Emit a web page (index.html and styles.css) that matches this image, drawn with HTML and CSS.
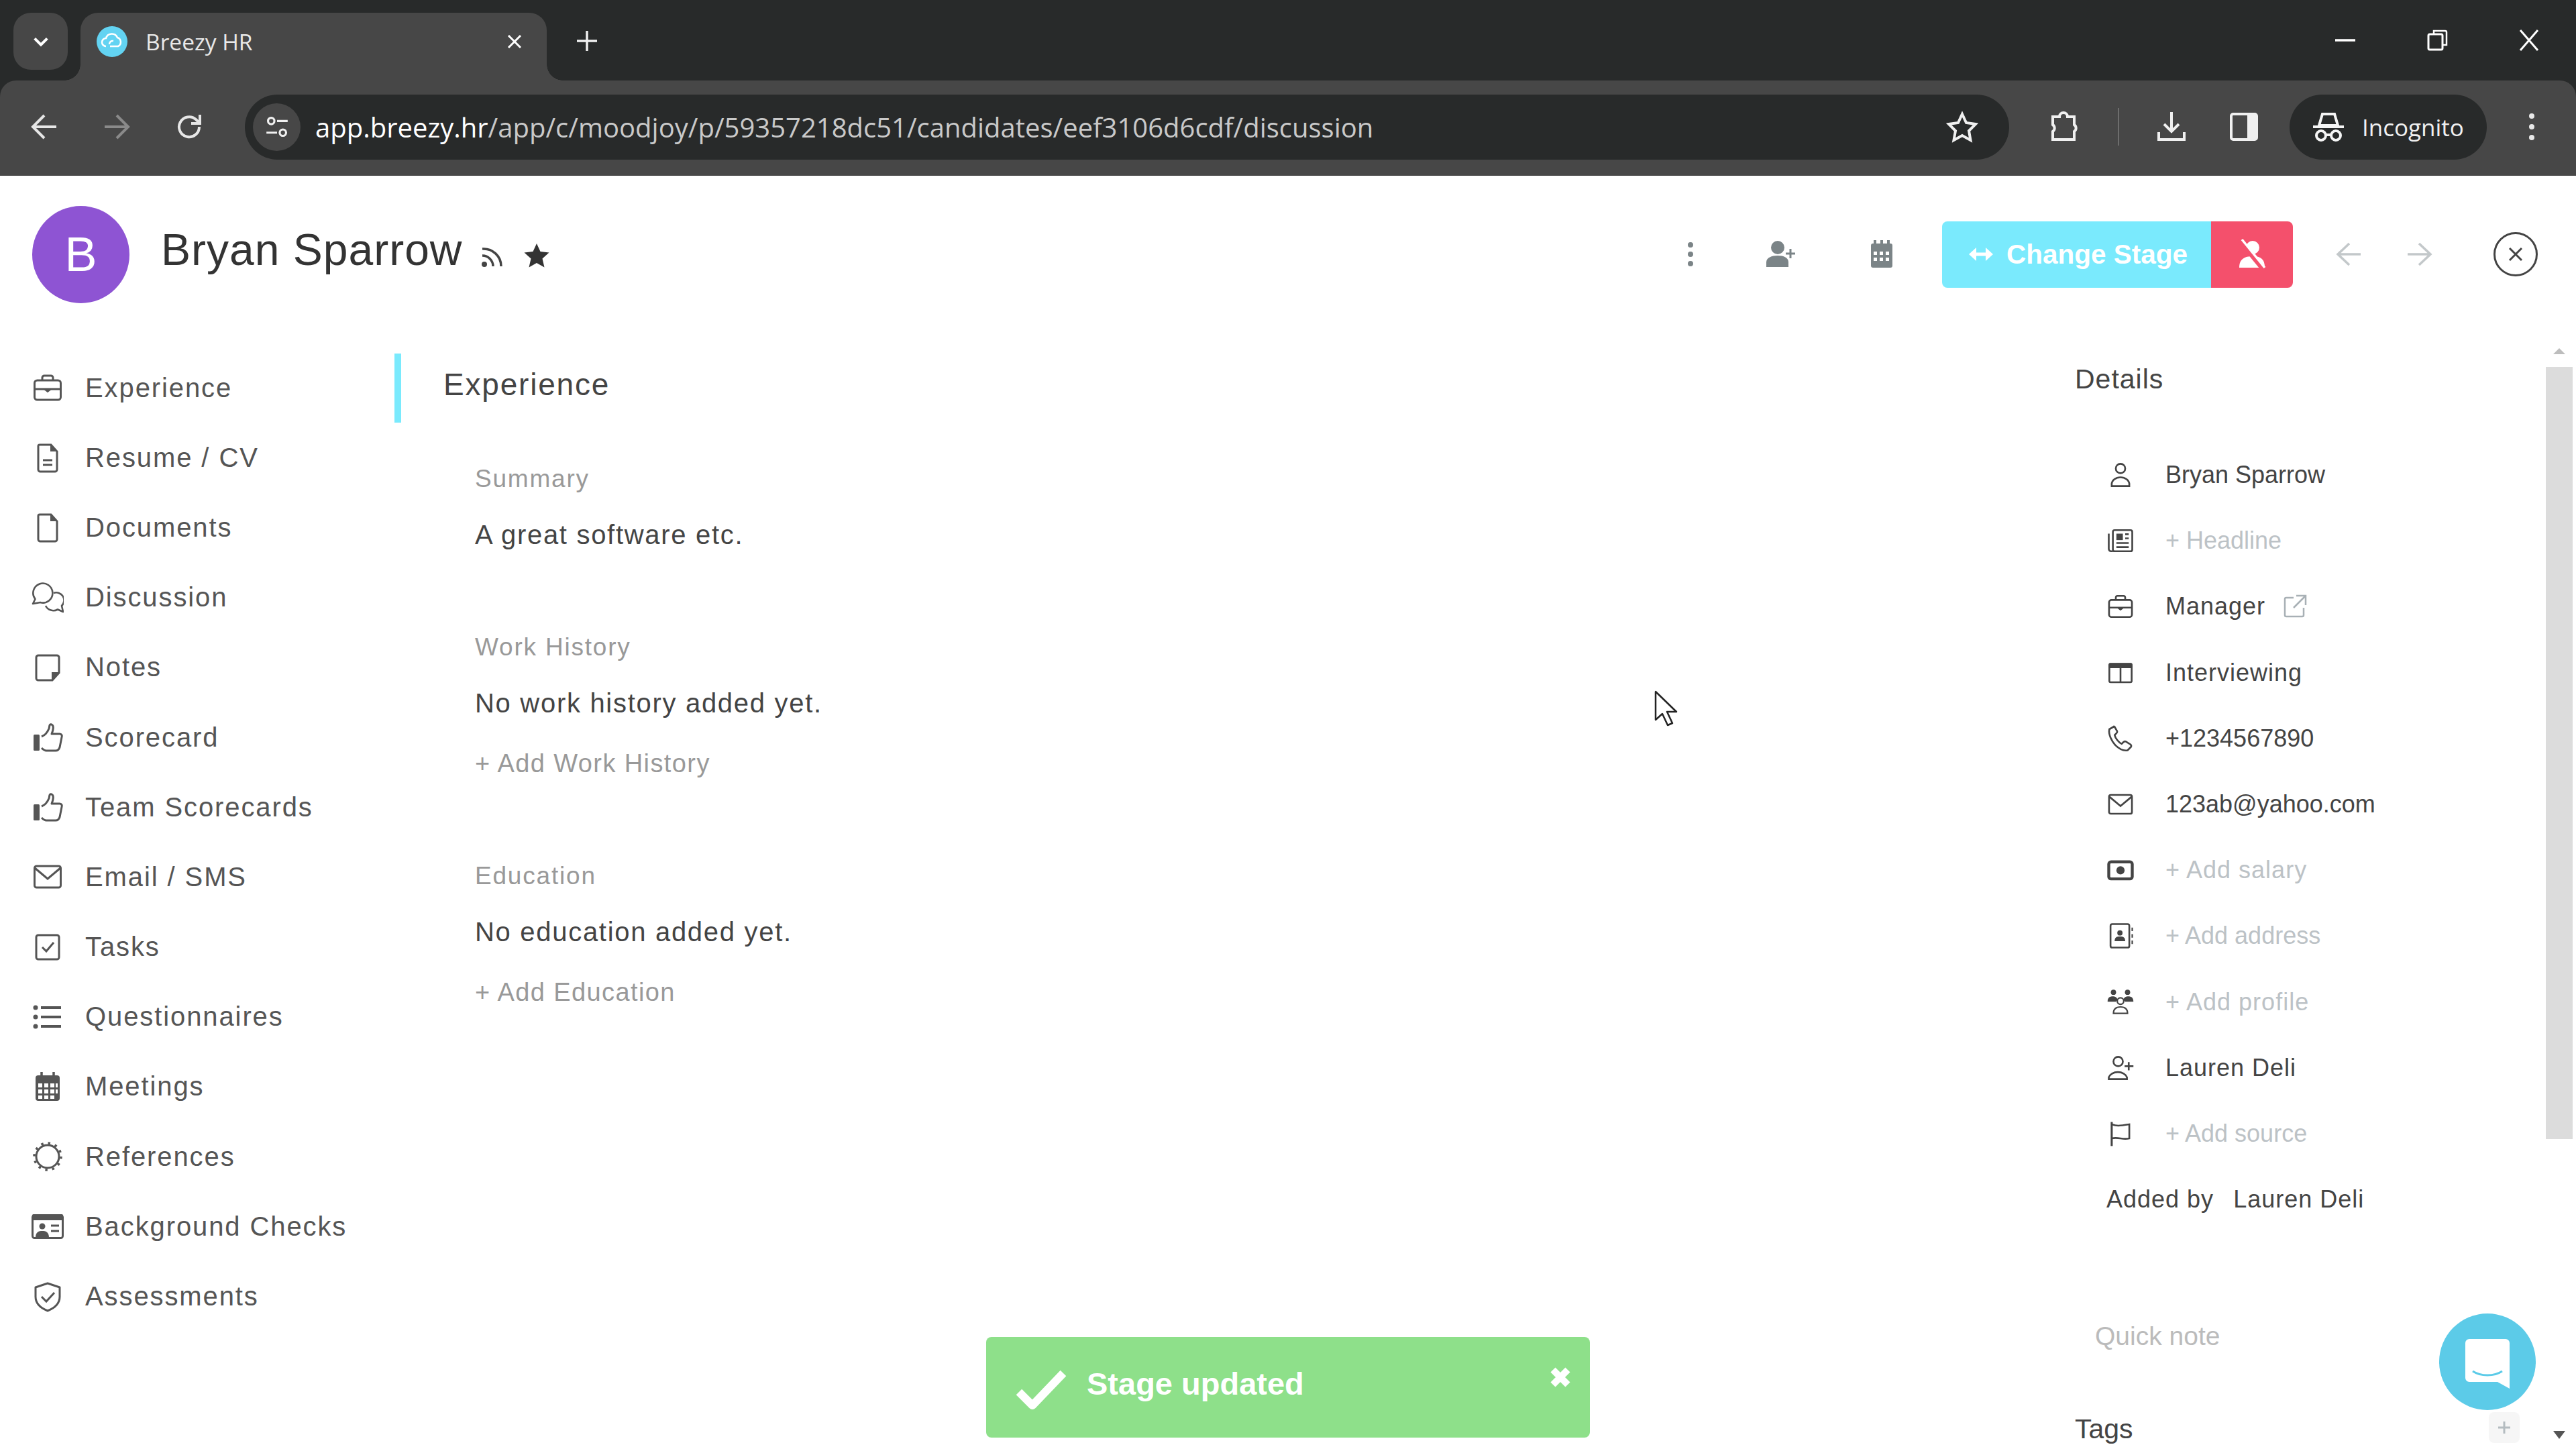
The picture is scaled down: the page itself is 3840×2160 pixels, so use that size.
FILE: index.html
```html
<!DOCTYPE html>
<html lang="en">
<head>
<meta charset="utf-8">
<title>Breezy HR</title>
<link rel="stylesheet" href="styles.css">
</head>
<body>
<svg class="sprite" aria-hidden="true">
  <symbol id="i-brief" viewBox="0 0 48 48"><g fill="none" stroke="currentColor" stroke-width="3"><rect x="4.500" y="13" width="39" height="29" rx="4"/><path d="M16 13V9a3 3 0 0 1 3-3h10a3 3 0 0 1 3 3v4M4.500 26h39"/></g><path d="M19 26h10l-5 4z" fill="currentColor" stroke="currentColor" stroke-width="2"/></symbol>
  <symbol id="i-resume" viewBox="0 0 48 48"><path d="M10 7a2 2 0 0 1 2-2h17l9 10v27a3 3 0 0 1-3 3H13a3 3 0 0 1-3-3z" fill="none" stroke="currentColor" stroke-width="3"/><path d="M28 5l10 10H28z" fill="currentColor"/><path d="M17 28h14M17 35h14" stroke="currentColor" stroke-width="3"/></symbol>
  <symbol id="i-doc" viewBox="0 0 48 48"><path d="M10 7a2 2 0 0 1 2-2h17l9 10v27a3 3 0 0 1-3 3H13a3 3 0 0 1-3-3z" fill="none" stroke="currentColor" stroke-width="3"/><path d="M28 5l10 10H28z" fill="currentColor"/></symbol>
  <symbol id="i-talk" viewBox="0 0 48 48"><g fill="none" stroke="currentColor" stroke-width="2.600" stroke-linejoin="round"><path d="M2 33l3.500-7A14.500 14.500 0 1 1 13 31z"/><path d="M33 17a11.500 11.500 0 0 1 12 19l2 9-8-3.500A13 13 0 0 1 21 36"/></g></symbol>
  <symbol id="i-note" viewBox="0 0 48 48"><path d="M10 6h28a3 3 0 0 1 3 3v23L31 43H10a3 3 0 0 1-3-3V9a3 3 0 0 1 3-3z" fill="none" stroke="currentColor" stroke-width="3"/><path d="M41 31H30v12z" fill="currentColor"/></symbol>
  <symbol id="i-thumb" viewBox="0 0 48 48"><rect x="3" y="20" width="9" height="24" rx="1.500" fill="currentColor"/><path d="M15 23c5-2 9-7 11-12 1-3 0-7 4-6 4 2 2 9 0 14h12c3 0 4 3 3 5l-3 15c-1 3-3 5-6 5H22c-3 0-5-2-7-4" fill="none" stroke="currentColor" stroke-width="3" stroke-linejoin="round"/></symbol>
  <symbol id="i-mail" viewBox="0 0 48 48"><rect x="4.500" y="8" width="39" height="32" rx="3" fill="none" stroke="currentColor" stroke-width="3"/><path d="M5 11l19 16 19-16" fill="none" stroke="currentColor" stroke-width="3"/></symbol>
  <symbol id="i-task" viewBox="0 0 48 48"><rect x="7" y="6" width="34" height="36" rx="3" fill="none" stroke="currentColor" stroke-width="3"/><path d="M16 24l6 6 11-13" fill="none" stroke="currentColor" stroke-width="3"/></symbol>
  <symbol id="i-list" viewBox="0 0 48 48"><path d="M14 10h30M14 24h30M14 38h30" stroke="currentColor" stroke-width="4"/><circle cx="6" cy="10" r="3.500" fill="currentColor"/><circle cx="6" cy="24" r="3.500" fill="currentColor"/><circle cx="6" cy="38" r="3.500" fill="currentColor"/></symbol>
  <symbol id="i-cal" viewBox="0 0 48 48"><path d="M15 2v8M33 2v8" stroke="currentColor" stroke-width="3.500"/><rect x="6" y="7" width="36" height="38" rx="4" fill="currentColor"/><g fill="#fff"><rect x="10" y="19" width="6" height="6"/><rect x="19" y="19" width="6" height="6"/><rect x="28" y="19" width="6" height="6"/><rect x="36" y="19" width="3" height="6"/><rect x="10" y="28" width="6" height="6"/><rect x="19" y="28" width="6" height="6"/><rect x="28" y="28" width="6" height="6"/><rect x="36" y="28" width="3" height="6"/><rect x="10" y="37" width="6" height="5"/><rect x="19" y="37" width="6" height="5"/><rect x="28" y="37" width="6" height="5"/></g></symbol>
  <symbol id="i-ref" viewBox="0 0 48 48"><g fill="none" stroke="currentColor"><circle cx="24" cy="24" r="17" stroke-width="3"/><circle cx="24" cy="24" r="20" stroke-width="3.500" stroke-dasharray="3.500 6.970"/></g></symbol>
  <symbol id="i-id" viewBox="0 0 48 48"><rect x="1.500" y="7.500" width="45" height="34" rx="3" fill="none" stroke="currentColor" stroke-width="3"/><rect x="1" y="6" width="46" height="9" rx="2" fill="currentColor"/><circle cx="16" cy="24" r="4.500" fill="currentColor"/><path d="M6 41c0-9 5-10 10-10s10 1 10 10z" fill="currentColor"/><path d="M29 23h12M29 31h12" stroke="currentColor" stroke-width="3"/></symbol>
  <symbol id="i-shield" viewBox="0 0 48 48"><path d="M24 4l18 6v14c0 10-8 17-18 21C14 41 6 34 6 24V10z" fill="none" stroke="currentColor" stroke-width="3" stroke-linejoin="round"/><path d="M15 24l7 7 12-13" fill="none" stroke="currentColor" stroke-width="3"/></symbol>
  <symbol id="i-person" viewBox="0 0 48 48"><g fill="none" stroke="currentColor" stroke-width="3"><circle cx="24" cy="13" r="8"/><path d="M9 43v-3a15 12 0 0 1 30 0v3z"/></g></symbol>
  <symbol id="i-news" viewBox="0 0 48 48"><g fill="none" stroke="currentColor" stroke-width="3"><rect x="11" y="6" width="33" height="36" rx="3"/><path d="M11 42H8a4 4 0 0 1-4-4V12"/></g><rect x="17" y="12" width="11" height="11" fill="currentColor"/><path d="M32 13h6M32 20h6M17 28h21M17 35h21" stroke="currentColor" stroke-width="3"/></symbol>
  <symbol id="i-board" viewBox="0 0 48 48"><rect x="5" y="9" width="38" height="31" rx="2" fill="none" stroke="currentColor" stroke-width="3"/><rect x="4" y="7" width="40" height="9" rx="2" fill="currentColor"/><path d="M24 14v26" stroke="currentColor" stroke-width="3"/></symbol>
  <symbol id="i-phone" viewBox="0 0 48 48"><path d="M12 4L5 8c-2 9 4 20 10 27 7 7 15 10 21 9l6-6c1-2 0-3-1-4l-8-5c-2-1-3 0-4 1l-3 3c-5-2-11-10-12-15l3-3c1-1 2-2 1-4l-4-7c-1-1-2-1-2 0z" fill="none" stroke="currentColor" stroke-width="3" stroke-linejoin="round"/></symbol>
  <symbol id="i-money" viewBox="0 0 48 48"><rect x="4" y="10" width="40" height="29" rx="4" fill="none" stroke="currentColor" stroke-width="5"/><circle cx="24" cy="24.500" r="7" fill="currentColor"/></symbol>
  <symbol id="i-contact" viewBox="0 0 48 48"><rect x="7" y="4" width="32" height="40" rx="3" fill="none" stroke="currentColor" stroke-width="3"/><circle cx="23" cy="19" r="4.500" fill="currentColor"/><path d="M14 33c0-7 4-8 9-8s9 1 9 8z" fill="currentColor"/><path d="M44 10v6M44 21v6M44 32v6" stroke="currentColor" stroke-width="2.500"/></symbol>
  <symbol id="i-group" viewBox="0 0 48 48"><circle cx="12" cy="7" r="4.500" fill="currentColor"/><circle cx="36" cy="7" r="4.500" fill="currentColor"/><path d="M2 23c0-8 5-9 9-9 3 0 7 1 8 6l-3 3zM46 23c0-8-5-9-9-9-3 0-7 1-8 6l3 3z" fill="currentColor"/><g fill="none" stroke="currentColor" stroke-width="2.500"><circle cx="24" cy="22" r="5.500"/><path d="M12 43c0-8 4-11 12-11s12 3 12 11z"/></g></symbol>
  <symbol id="i-padd" viewBox="0 0 48 48"><g fill="none" stroke="currentColor" stroke-width="3"><circle cx="20" cy="13" r="8"/><path d="M4 43v-3a16 12 0 0 1 31 0v3z"/><path d="M38 14v14M31 21h15"/></g></symbol>
  <symbol id="i-flag" viewBox="0 0 48 48"><path d="M9 4v41" stroke="currentColor" stroke-width="3.500"/><path d="M9 8c8 3 12 3 30 0v24c-12 3-18-3-30 0" fill="none" stroke="currentColor" stroke-width="3"/></symbol>
</svg>

<div class="page">
  <div class="chrome">
    <div class="tabstrip">
      <div class="tabsearch"><svg class="ic-s" viewBox="0 0 24 24"><path d="M4 8l8 8 8-8" fill="none" stroke="#fff" stroke-width="3.500"/></svg></div>
      <div class="tab">
        <svg class="favicon" viewBox="0 0 46 46"><circle cx="23" cy="23" r="23" fill="#63d3f2"/><path d="M14 30a6 6 0 0 1 0-12 9 9 0 0 1 17-1 7 7 0 0 1 1 13H20m5-8a5 5 0 0 0-6 5" fill="none" stroke="#fff" stroke-width="2.500"/></svg>
        <span class="tabtitle">Breezy HR</span>
        <svg class="tabclose" viewBox="0 0 24 24"><path d="M3 3l18 18M21 3L3 21" stroke="#fff" stroke-width="3"/></svg>
      </div>
      <svg class="newtab" viewBox="0 0 34 34"><path d="M17 2v30M2 17h30" stroke="#f0f0f0" stroke-width="3.500"/></svg>
      <div class="winctl">
        <svg class="win-i" viewBox="0 0 32 32"><path d="M1 16h30" stroke="#fff" stroke-width="3.500"/></svg>
        <svg class="win-i win-gap" viewBox="0 0 32 32"><path d="M11 7V2h17a2 2 0 0 1 2 2v19h-6" fill="none" stroke="#fff" stroke-width="2.500"/><rect x="3" y="7" width="21" height="23" rx="2" fill="none" stroke="#fff" stroke-width="3"/></svg>
        <svg class="win-i win-gap" viewBox="0 0 32 32"><path d="M3 1l26 30M29 1L3 31" stroke="#fff" stroke-width="3"/></svg>
      </div>
    </div>
    <div class="toolbar">
      <div class="navbtn"><svg class="tb-i" viewBox="0 0 48 48"><path d="M42 24H8M24 7L7 24l17 17" fill="none" stroke="#e6e6e6" stroke-width="4"/></svg></div>
      <div class="navbtn"><svg class="tb-i" viewBox="0 0 48 48"><path d="M6 24h34M24 7l17 17-17 17" fill="none" stroke="#8a8a8a" stroke-width="4"/></svg></div>
      <div class="navbtn"><svg class="tb-i" viewBox="0 0 48 48"><path d="M39 24a15 15 0 1 1-5-11l5 5M40 6v13H27" fill="none" stroke="#e6e6e6" stroke-width="4"/></svg></div>
      <div class="omni">
        <div class="sitebtn"><svg class="tb-i" viewBox="0 0 48 48"><g fill="none" stroke="#f0f0f0" stroke-width="4"><circle cx="13" cy="13" r="6"/><circle cx="35" cy="35" r="6"/><path d="M24 13h20M4 35h20"/></g></svg></div>
        <span class="url"><span class="url-host">app.breezy.hr</span>/app/c/moodjoy/p/59357218dc51/candidates/eef3106d6cdf/discussion</span>
        <svg class="tb-i star" viewBox="0 0 48 48"><path d="M24 5l6 13 14 2-10 10 2.500 14L24 37l-12.500 7L14 30 4 20l14-2z" fill="none" stroke="#f0f0f0" stroke-width="4"/></svg>
      </div>
      <svg class="tb-i ext" viewBox="0 0 48 48"><path d="M8 9h10a6 6 0 0 1 12 0h10v12a6 6 0 0 1 0 10v12H8V31a6 6 0 0 0 0-10z" fill="none" stroke="#f0f0f0" stroke-width="4"/></svg>
      <span class="tb-div"></span>
      <svg class="tb-i dl" viewBox="0 0 48 48"><path d="M24 2v28M13 20l11 11 11-11M5 32v11h38V32" fill="none" stroke="#f0f0f0" stroke-width="4"/></svg>
      <svg class="tb-i side" viewBox="0 0 48 48"><rect x="5" y="5" width="38" height="38" rx="3" fill="none" stroke="#f0f0f0" stroke-width="4"/><rect x="29" y="5" width="14" height="38" fill="#f0f0f0"/></svg>
      <div class="incog">
        <svg class="tb-i" viewBox="0 0 48 48"><path d="M15 5h18l5 17H10zM1 24h46" fill="none" stroke="#f5f5f5" stroke-width="4"/><g fill="none" stroke="#f5f5f5" stroke-width="4"><circle cx="13" cy="37" r="7"/><circle cx="35" cy="37" r="7"/><path d="M20 36h8"/></g></svg>
        <span class="incog-t">Incognito</span>
      </div>
      <svg class="tb-i dots" viewBox="0 0 48 48"><circle cx="24" cy="8" r="4" fill="#e8e8e8"/><circle cx="24" cy="24" r="4" fill="#e8e8e8"/><circle cx="24" cy="40" r="4" fill="#e8e8e8"/></svg>
    </div>
  </div>

  <header class="head">
    <div class="avatar">B</div>
    <h1 class="name">Bryan Sparrow</h1>
    <svg class="rss" viewBox="0 0 32 32"><circle cx="5" cy="27" r="4" fill="#444"/><path d="M2 14a16 16 0 0 1 16 16M2 4a26 26 0 0 1 28 26" fill="none" stroke="#444" stroke-width="3.500"/></svg>
    <svg class="fav" viewBox="0 0 38 38"><path d="M19 1l5.500 12 13 1.500-10 9 3 13L19 30 7.500 36.500l3-13-10-9L13.500 13z" fill="#333"/></svg>
    <div class="actions">
      <svg class="ha" viewBox="0 0 48 48"><circle cx="24" cy="10" r="4" fill="#7b8487"/><circle cx="24" cy="24" r="4" fill="#7b8487"/><circle cx="24" cy="38" r="4" fill="#7b8487"/></svg>
      <svg class="ha ha-person" viewBox="0 0 48 48"><circle cx="20" cy="14" r="10" fill="#7b8487"/><path d="M3 43V36c0-7 8-10 17-10s16 3 16 10v7z" fill="#7b8487"/><path d="M39 16v14M32 23h14" stroke="#7b8487" stroke-width="3"/></svg>
      <svg class="ha ha-cal" viewBox="0 0 48 48"><path d="M14 3v8M24 3v8M34 3v8" stroke="#7b8487" stroke-width="4"/><rect x="8" y="8" width="32" height="36" rx="3" fill="#7b8487"/><g fill="#fff"><rect x="12" y="20" width="5" height="5"/><rect x="21" y="20" width="5" height="5"/><rect x="30" y="20" width="5" height="5"/><rect x="12" y="29" width="5" height="5"/><rect x="21" y="29" width="5" height="5"/><rect x="30" y="29" width="5" height="5"/></g></svg>
      <div class="btns">
        <div class="btn-stage">
          <svg class="btn-arrows" viewBox="0 0 38 24"><path d="M1 12l11-10v20zM37 12L26 2v20z" fill="#fff"/><path d="M8 12h22" stroke="#fff" stroke-width="5"/></svg>
          <span>Change Stage</span>
        </div>
        <div class="btn-rej"><svg class="btn-x" viewBox="0 0 48 48"><circle cx="25" cy="14" r="10" fill="#fff"/><path d="M5 44c0-13 8-17 20-17s18 4 18 17z" fill="#fff"/><path d="M5 2l36 44" stroke="#f4506c" stroke-width="8"/><path d="M9 2l34 42" stroke="#fff" stroke-width="3.500"/></svg></div>
      </div>
      <svg class="ha ha-prev" viewBox="0 0 48 48"><path d="M42 24H9M25 8L8 24l17 16" fill="none" stroke="#c3c8ca" stroke-width="3.500"/></svg>
      <svg class="ha ha-next" viewBox="0 0 48 48"><path d="M6 24h33M23 8l17 16-17 16" fill="none" stroke="#c3c8ca" stroke-width="3.500"/></svg>
      <div class="closebtn"><svg class="closex" viewBox="0 0 24 24"><path d="M3 3l18 18M21 3L3 21" stroke="#444" stroke-width="3"/></svg></div>
    </div>
  </header>

  <div class="cols">
    <nav class="nav">
      <a class="nav-i"><svg class="ico"><use href="#i-brief"/></svg>Experience</a>
      <a class="nav-i"><svg class="ico"><use href="#i-resume"/></svg>Resume / CV</a>
      <a class="nav-i"><svg class="ico"><use href="#i-doc"/></svg>Documents</a>
      <a class="nav-i"><svg class="ico"><use href="#i-talk"/></svg>Discussion</a>
      <a class="nav-i"><svg class="ico"><use href="#i-note"/></svg>Notes</a>
      <a class="nav-i"><svg class="ico"><use href="#i-thumb"/></svg>Scorecard</a>
      <a class="nav-i"><svg class="ico"><use href="#i-thumb"/></svg>Team Scorecards</a>
      <a class="nav-i"><svg class="ico"><use href="#i-mail"/></svg>Email / SMS</a>
      <a class="nav-i"><svg class="ico"><use href="#i-task"/></svg>Tasks</a>
      <a class="nav-i"><svg class="ico"><use href="#i-list"/></svg>Questionnaires</a>
      <a class="nav-i"><svg class="ico"><use href="#i-cal"/></svg>Meetings</a>
      <a class="nav-i"><svg class="ico"><use href="#i-ref"/></svg>References</a>
      <a class="nav-i"><svg class="ico"><use href="#i-id"/></svg>Background Checks</a>
      <a class="nav-i"><svg class="ico"><use href="#i-shield"/></svg>Assessments</a>
    </nav>

    <main class="content">
      <h2 class="c-title">Experience</h2>
      <section class="sec">
        <div class="lbl">Summary</div>
        <div class="val">A great software etc.</div>
      </section>
      <section class="sec">
        <div class="lbl">Work History</div>
        <div class="val">No work history added yet.</div>
        <div class="add">+ Add Work History</div>
      </section>
      <section class="sec">
        <div class="lbl">Education</div>
        <div class="val">No education added yet.</div>
        <div class="add">+ Add Education</div>
      </section>
    </main>

    <aside class="details">
      <h3 class="d-title">Details</h3>
      <div class="d-list">
        <div class="d-row"><svg class="ico d-ico"><use href="#i-person"/></svg>Bryan Sparrow</div>
        <div class="d-row d-ph"><svg class="ico d-ico"><use href="#i-news"/></svg>+ Headline</div>
        <div class="d-row d-wide"><svg class="ico d-ico"><use href="#i-brief"/></svg>Manager<svg class="ext-link" viewBox="0 0 36 36"><path d="M16 5H5a2 2 0 0 0-2 2v24a2 2 0 0 0 2 2h24a2 2 0 0 0 2-2V20M20 2h14v14M34 2L16 20" fill="none" stroke="#a8b0b5" stroke-width="2.500"/></svg></div>
        <div class="d-row d-wide"><svg class="ico d-ico"><use href="#i-board"/></svg>Interviewing</div>
        <div class="d-row"><svg class="ico d-ico"><use href="#i-phone"/></svg>+1234567890</div>
        <div class="d-row"><svg class="ico d-ico"><use href="#i-mail"/></svg>123ab@yahoo.com</div>
        <div class="d-row d-ph d-wide"><svg class="ico d-ico"><use href="#i-money"/></svg>+ Add salary</div>
        <div class="d-row d-ph"><svg class="ico d-ico"><use href="#i-contact"/></svg>+ Add address</div>
        <div class="d-row d-ph d-wide"><svg class="ico d-ico"><use href="#i-group"/></svg>+ Add profile</div>
        <div class="d-row d-wide"><svg class="ico d-ico"><use href="#i-padd"/></svg>Lauren Deli</div>
        <div class="d-row d-ph"><svg class="ico d-ico"><use href="#i-flag"/></svg>+ Add source</div>
        <div class="d-row d-by d-wide"><span class="by-l">Added by</span>Lauren Deli</div>
      </div>
      <div class="quick">Quick note</div>
      <div class="tags"><span>Tags</span><span class="tag-add"><svg class="tag-plus" viewBox="0 0 20 20"><path d="M10 1v18M1 10h18" stroke="#b4bcc0" stroke-width="3"/></svg></span></div>
    </aside>

    <div class="sbar">
      <span class="sb-up"></span>
      <span class="sb-thumb"></span>
      <span class="sb-down"></span>
    </div>
  </div>

  <div class="toast">
    <svg class="t-check" viewBox="0 0 78 60"><path d="M6 34l20 20L72 6" fill="none" stroke="#fff" stroke-width="12" stroke-linejoin="round"/></svg>
    <span class="t-text">Stage updated</span>
    <svg class="t-close" viewBox="0 0 32 32"><path d="M5 5l22 22M27 5L5 27" stroke="#fff" stroke-width="10"/></svg>
  </div>

  <div class="chat"><svg class="chat-i" viewBox="0 0 66 74"><path d="M6 0h54a6 6 0 0 1 6 6v68L48 64H6a6 6 0 0 1-6-6V6a6 6 0 0 1 6-6z" fill="#fff"/><path d="M11 48c12 8 32 8 44 0" fill="none" stroke="#5ccbe8" stroke-width="3"/></svg></div>

  <svg class="cursor" viewBox="0 0 38 54"><path d="M2 2v42l10-9 8 17 7-3-8-17h14z" fill="#fff" stroke="#222" stroke-width="2.500" stroke-linejoin="round"/></svg>
</div>
</body>
</html>
```
FILE: styles.css
```css
* { box-sizing: border-box; }
html, body { margin: 0; padding: 0; background: #fff; }
body { width: 3840px; height: 2160px; overflow: hidden; font-family: "Liberation Sans", Arial, sans-serif; color: #444; }
.sprite { display: none; }
.page { position: relative; width: 3840px; height: 2160px; overflow: hidden; display: flex; flex-direction: column; }

/* browser chrome */
.chrome { background: #282a2a; flex: none; height: 262px; font-family: "Open Sans", sans-serif; }
.tabstrip { height: 120px; display: flex; align-items: flex-start; padding: 19px 0 0 20px; }
.tabsearch { width: 81px; height: 85px; border-radius: 26px; background: #474747; display: flex; align-items: center; justify-content: center; }
.ic-s { width: 28px; height: 28px; }
.tab { position: relative; margin-left: 19px; width: 695px; height: 101px; background: #474747; border-radius: 26px 26px 0 0; display: flex; align-items: center; padding: 0 36px 16px 24px; }
.tab::before, .tab::after { content: ""; position: absolute; bottom: 0; width: 24px; height: 24px; }
.tab::before { left: -24px; background: radial-gradient(circle at 0 0, #282a2a 23.500px, #474747 24px); }
.tab::after { right: -24px; background: radial-gradient(circle at 100% 0, #282a2a 23.500px, #474747 24px); }
.favicon { width: 46px; height: 46px; flex: none; }
.tabtitle { margin-left: 27px; font-size: 33.500px; color: #e8e8e8; white-space: nowrap; }
.tabclose { margin-left: auto; width: 24px; height: 24px; }
.newtab { width: 34px; height: 34px; margin: 25px 0 0 43px; }
.winctl { margin-left: auto; display: flex; align-items: center; padding: 25px 54px 0 0; }
.win-i { width: 32px; height: 32px; display: block; }
.win-gap { margin-left: 105px; }

.toolbar { height: 142px; background: #474747; border-radius: 24px 24px 0 0; display: flex; align-items: center; padding: 0 0 4px 12px; }
.navbtn { width: 108px; display: flex; justify-content: center; }
.tb-i { width: 48px; height: 48px; flex: none; display: block; }
.omni { margin-left: 29px; width: 2630px; height: 97px; background: #282a2a; border-radius: 49px; display: flex; align-items: center; padding: 0 46px 0 12px; }
.sitebtn { width: 71px; height: 71px; border-radius: 50%; background: #474747; display: flex; align-items: center; justify-content: center; flex: none; }
.sitebtn .tb-i { width: 38px; height: 38px; }
.url { margin-left: 22px; font-size: 40px; color: #c9c9c9; white-space: nowrap; }
.url-host { color: #fff; }
.star { margin-left: auto; }
.ext { margin-left: 57px; }
.tb-div { width: 2px; height: 56px; background: #6d6d6d; margin-left: 57px; flex: none; }
.dl { margin-left: 54px; }
.side { margin-left: 60px; }
.incog { margin-left: 44px; width: 294px; height: 97px; background: #282a2a; border-radius: 49px; display: flex; align-items: center; padding-left: 34px; flex: none; }
.incog-t { margin-left: 26px; font-size: 35px; color: #f0f0f0; }
.dots { margin-left: 43px; }

/* page header */
.head { flex: none; height: 254px; padding: 0 0 20px 48px; display: flex; align-items: center; }
.avatar { width: 145px; height: 145px; border-radius: 50%; background: #8e54d3; color: #fff; font-size: 72px; display: flex; align-items: center; justify-content: center; flex: none; }
.name { margin: 0 0 14px 47px; font-size: 66px; font-weight: 400; letter-spacing: 1px; color: #333; white-space: nowrap; }
.rss { width: 32px; height: 32px; margin: 8px 0 0 27px; flex: none; }
.fav { width: 38px; height: 38px; margin: 4px 0 0 32px; flex: none; }
.actions { margin-left: auto; display: flex; align-items: center; padding-right: 57px; }
.ha { width: 48px; height: 48px; flex: none; display: block; }
.ha-person { margin-left: 86px; }
.ha-cal { margin-left: 103px; }
.ha-prev { margin-left: 59px; }
.ha-next { margin-left: 58px; }
.btns { margin-left: 66px; display: flex; height: 99px; border-radius: 8px; overflow: hidden; }
.btn-stage { width: 401px; background: #7aeafd; color: #fff; font-size: 40.500px; font-weight: 700; display: flex; align-items: center; padding-left: 39px; }
.btn-arrows { width: 38px; height: 24px; margin-right: 19px; flex: none; }
.btn-rej { width: 122px; background: #f4506c; display: flex; align-items: center; justify-content: center; }
.btn-x { width: 48px; height: 48px; }
.closebtn { margin-left: 86px; width: 66px; height: 66px; border: 3px solid #444; border-radius: 50%; display: flex; align-items: center; justify-content: center; flex: none; }
.closex { width: 24px; height: 24px; }

/* columns */
.cols { flex: 1; display: flex; min-height: 0; }
.nav { flex: none; width: 588px; padding: 10px 0 0 47px; }
.nav-i { height: 104.200px; display: flex; align-items: center; font-size: 40px; letter-spacing: 1.900px; color: #555; white-space: nowrap; }
.ico { width: 48px; height: 48px; flex: none; margin-right: 32px; color: #555; }

.content { flex: 1; min-width: 0; padding-top: 11px; }
.c-title { margin: 0; height: 103px; border-left: 10px solid #7aeafd; padding-left: 63px; font-size: 46px; font-weight: 400; letter-spacing: 1.800px; line-height: 93px; color: #444; }
.sec { margin: 118px 0 0 120px; }
.c-title + .sec { margin-top: 59px; }
.lbl { height: 50px; line-height: 50px; font-size: 37px; letter-spacing: 1.800px; color: #999; }
.val { height: 50px; line-height: 50px; margin-top: 33px; font-size: 40px; letter-spacing: 1.700px; color: #444; }
.add { height: 50px; line-height: 50px; margin-top: 40px; font-size: 38px; letter-spacing: 1.400px; color: #999; }

.details { flex: none; width: 702px; padding-top: 24px; }
.d-title { margin: 0; height: 50px; line-height: 50px; font-size: 41px; font-weight: 400; letter-spacing: 1px; color: #444; }
.d-list { margin-top: 69px; }
.d-row { height: 98.200px; display: flex; align-items: center; padding-left: 44px; font-size: 36px; color: #444; white-space: nowrap; }
.d-wide { letter-spacing: 1px; }
.d-ico { width: 42px; height: 42px; margin: 0 46px 0 3px; color: #444; }
.d-ph { color: #bcc2c6; }
.ext-link { width: 36px; height: 36px; margin-left: 26px; flex: none; }
.d-by { padding-left: 47px; }
.by-l { margin-right: 29px; }
.quick { margin: 130px 0 0 30px; height: 50px; line-height: 50px; font-size: 39px; color: #bbb; }
.tags { margin-top: 83px; height: 60px; display: flex; align-items: center; font-size: 41px; color: #444; position: relative; }
.tag-add { position: absolute; left: 617px; top: 5px; width: 46px; height: 46px; background: #f6f6f6; border-radius: 8px; display: flex; align-items: center; justify-content: center; }
.tag-plus { width: 20px; height: 20px; }

.sbar { flex: none; width: 45px; display: flex; flex-direction: column; align-items: center; padding: 3px 5px 0 0; }
.sb-up, .sb-down { width: 0; height: 0; border-left: 9px solid transparent; border-right: 9px solid transparent; flex: none; }
.sb-up { border-bottom: 9px solid #bdbdbd; }
.sb-thumb { width: 40px; height: 1151px; margin: 19px 0 435px; background: #dcdcdc; flex: none; }
.sb-down { border-top: 12px solid #555; }

/* overlays */
.toast { position: absolute; left: 1470px; top: 1993px; width: 900px; height: 150px; background: #8ee08a; border-radius: 8px; display: flex; align-items: center; padding: 0 0 0 43px; color: #fff; }
.t-check { width: 78px; height: 60px; flex: none; margin-top: 6px; }
.t-text { margin: 0 0 12px 29px; font-size: 47px; font-weight: 700; color: #fff; }
.t-close { position: absolute; left: 840px; top: 44px; width: 32px; height: 32px; }
.chat { position: absolute; left: 3636px; top: 1958px; width: 144px; height: 144px; border-radius: 50%; background: #5ccbe8; display: flex; align-items: center; justify-content: center; }
.chat-i { width: 66px; height: 74px; margin-top: 6px; }
.cursor { position: absolute; left: 2466px; top: 1029px; width: 38px; height: 54px; }
```
